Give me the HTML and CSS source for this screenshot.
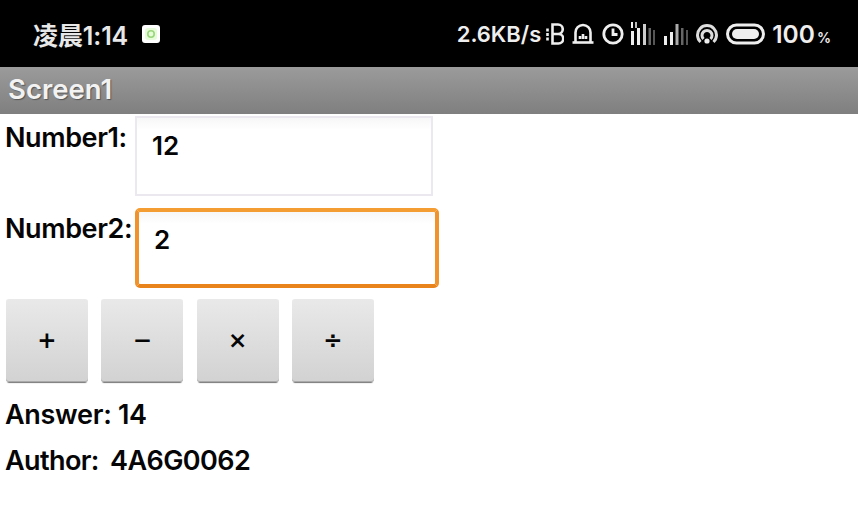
FILE: index.html
```html
<!DOCTYPE html>
<html lang="zh">
<head>
  <meta charset="UTF-8">
  <title>Screen1</title>
  <link rel="stylesheet" href="styles.css">
</head>
<body>
  <div class="statusbar">
    <div class="status-left">
      <span class="clock">凌晨1:14</span>
      <span class="app-icon"><svg width="18" height="18" viewBox="0 0 18 18"><rect width="18" height="18" rx="3" fill="#fff"/><rect x="3" y="3" width="12" height="12" rx="3" fill="#e6fbd8"/><circle cx="9" cy="9" r="3.2" fill="none" stroke="#9ad67c" stroke-width="1.6"/></svg></span>
    </div>
    <div class="status-right">
      <span class="speed">2.6KB/s</span>
      <svg class="ico" width="18" height="24" viewBox="0 0 18 24" fill="none" stroke="#eee" stroke-width="2.600"><path d="M1.500 6.500v3M1.500 11v3M1.500 15.500v3"/><path d="M6.500 2.500h5.500a4.700 4.700 0 0 1 0 9.500H6.500zM6.500 12h6a4.700 4.700 0 0 1 0 9.500H6.500z"/></svg>
      <svg class="ico" width="22" height="24" viewBox="0 0 22 24" fill="none" stroke="#eee" stroke-width="2.600"><path d="M3.500 20V10.500a7.500 7.500 0 0 1 15 0V20"/><path d="M.5 20.500h21"/><path d="M8 17v-3M11 17v-5M14 17v-3" stroke-width="2.600"/></svg>
      <svg class="ico ico-clock" width="22" height="24" viewBox="0 0 22 24" fill="none" stroke="#eee" stroke-width="2.800"><circle cx="11" cy="12" r="9.200"/><path d="M11 6.500V12.500H15.500"/></svg>
      <svg class="ico" width="25" height="26" viewBox="0 0 25 26" fill="#eee"><rect x="1" y="1" width="2" height="6"/><rect x="5" y="1" width="2" height="6" fill="#bbb"/><rect x="1" y="10" width="3" height="14"/><rect x="7" y="7" width="3" height="17"/><rect x="13" y="3" width="3" height="21" fill="#ccc"/><rect x="18.500" y="7" width="2.500" height="17" fill="#666"/><rect x="23" y="9" width="2" height="15" fill="#555"/></svg>
      <svg class="ico" width="25" height="26" viewBox="0 0 25 26" fill="#eee"><rect x="1" y="15" width="3" height="9"/><rect x="7" y="11" width="3" height="13"/><rect x="12.500" y="3" width="3" height="21" fill="#aaa"/><rect x="18" y="7" width="2.500" height="17" fill="#666"/><rect x="23" y="9" width="2" height="15" fill="#555"/></svg>
      <svg class="ico" width="22" height="24" viewBox="0 0 22 24" fill="none" stroke="#ddd" stroke-width="3"><path d="M4.500 20a9.500 9.500 0 1 1 13 0"/><path d="M7.500 17a5 5 0 1 1 7 0"/><circle cx="11" cy="19" r="2.600" fill="#eee" stroke="none"/></svg>
      <svg class="ico" width="39" height="24" viewBox="0 0 39 24" fill="none"><rect x="1.500" y="3" width="36" height="18" rx="9" stroke="#eee" stroke-width="3"/><rect x="6" y="7" width="27" height="10" rx="5" fill="#eee"/></svg>
      <span class="battery">100<small>%</small></span>
    </div>
  </div>
  <div class="titlebar">Screen1</div>
  <div class="content">
    <div class="field-row first">
      <label class="field-label">Number1:</label>
      <div class="textbox">12</div>
    </div>
    <div class="field-row second">
      <label class="field-label">Number2:</label>
      <div class="textbox focused">2</div>
    </div>
    <div class="buttons">
      <button class="btn">+</button>
      <button class="btn">−</button>
      <button class="btn">×</button>
      <button class="btn">÷</button>
    </div>
    <div class="result">Answer: 14</div>
    <div class="result author">Author: 4A6G0062</div>
  </div>
</body>
</html>
```

FILE: styles.css
```css
* { box-sizing: border-box; }
html, body { margin: 0; padding: 0; }
body { width: 858px; height: 515px; overflow: hidden; background: #fff; color: #050505; font-family: Inter, "Noto Sans CJK SC", sans-serif; }

.statusbar { height: 67px; background: #000; color: #eee; display: flex; justify-content: space-between; align-items: center; }
.status-left { display: flex; align-items: center; padding-left: 33px; }
.clock { font-size: 25px; font-weight: 600; letter-spacing: -0.1px; color: #e8e8e8; }
.app-icon { display: flex; margin-left: 14px; }
.status-right { display: flex; align-items: center; gap: 8px; padding-right: 27px; }
.speed { font-size: 22px; font-weight: 600; margin-right: -3px; }
.ico { display: block; flex: none; }
.ico-clock { margin-right: -2px; }
.battery { font-size: 24.500px; font-weight: 600; margin-left: -1px; }
.battery small { font-size: 14px; margin-left: 2px; }

.titlebar { height: 47px; padding-left: 8px; background: linear-gradient(#9b9b9b, #7f7f7f); color: #f2f2f2; font-size: 27.500px; font-weight: 600; line-height: 45px; text-shadow: 1px 1px 1px #555; }

.content { padding: 2px 5px 0; }
.field-row { display: flex; align-items: flex-start; }
.field-label { width: 130px; flex: none; font-size: 27px; font-weight: 600; letter-spacing: -0.4px; white-space: nowrap; }
.first .field-label { line-height: 44px; }
.second { margin-top: 12px; }
.second .field-label { line-height: 42px; }
.textbox { width: 298px; height: 80px; padding: 11px 15px; border: 2px solid #ebe8f0; background: linear-gradient(#f7f7f7, #fff 12px); font-size: 26px; font-weight: 600; line-height: 34px; }
.focused { width: 304px; height: 80px; padding: 11px 15px; border: 4px solid #f0962a; border-color: #f49d33 #f0932a #e8841b; border-radius: 5px; }

.buttons { display: flex; gap: 13.33px; margin-top: 11px; padding-left: 1px; }
.btn { width: 82px; height: 83px; padding: 0 0 2px; border: 0; border-radius: 3px; background: linear-gradient(#e9e9e9, #d2d2d2); box-shadow: 0 2px 1px -1px #777, inset 0 -1px 0 #aaa; color: #050505; font-family: "DejaVu Sans", sans-serif; font-size: 23px; font-weight: 700; }

.result { font-size: 27px; font-weight: 600; letter-spacing: -0.3px; line-height: 45px; }
.buttons + .result { margin-top: 10px; }
.author { margin-top: 1px; letter-spacing: -0.6px; word-spacing: 5px; }
```
